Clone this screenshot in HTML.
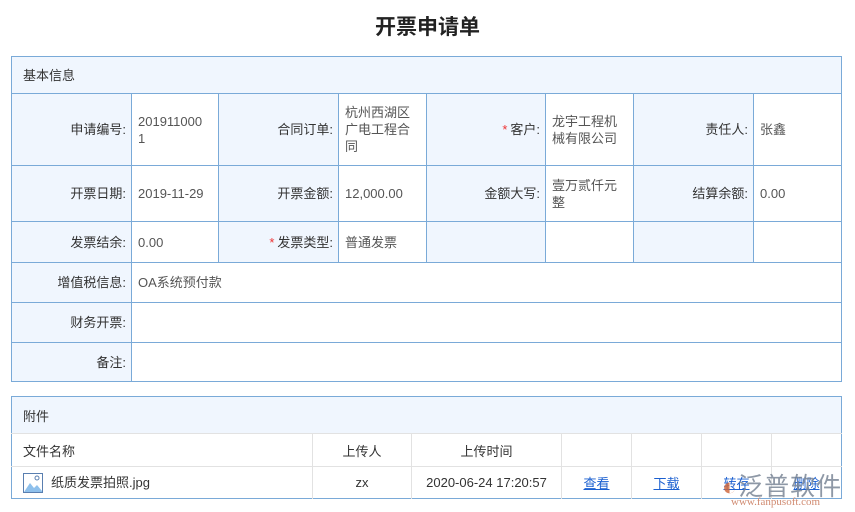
<!DOCTYPE html>
<html><head><meta charset="utf-8"><style>
*{margin:0;padding:0;box-sizing:border-box}
body{width:855px;height:512px;background:#fff;font-family:"Liberation Sans","Noto Sans CJK SC",sans-serif;font-size:13px;color:#333;position:relative;overflow:hidden}
h1{position:absolute;top:11px;left:0;width:855px;text-align:center;font-size:21px;font-weight:bold;color:#222}
table{border-collapse:collapse;position:absolute;left:11px;table-layout:fixed}
.t1{top:56px;width:830px}
.t1 td{border:1px solid #7aaad8;line-height:17px;vertical-align:middle;word-break:break-all}
.t1 .h{background:#f0f6fe;height:37px;padding-left:11px}
.l{background:#f0f6fe;text-align:right;padding-right:5px}
.v{color:#555;padding-left:6px;padding-right:4px}
.s{color:#e33;margin-right:3px}
.t2{top:396px;width:830px;border:1px solid #7aaad8}
.t2 td{border:1px solid #e2e2e2;vertical-align:middle}
.t2 .h{background:#f0f6fe;height:37px;padding-left:11px;border:none;border-bottom:1px solid #e2e2e2}
.c{text-align:center}
a{color:#1a5fd0;text-decoration:underline}
.wm{position:absolute;left:722px;top:467px;color:#7b8797;font-size:25px;letter-spacing:1px;opacity:.85}
.wm2{position:absolute;left:731px;top:496px;color:#d08a70;font-size:11px;font-family:"Liberation Serif",serif}
</style></head><body>
<h1>开票申请单</h1>
<table class="t1">
<colgroup><col style="width:120px"><col style="width:87px"><col style="width:120px"><col style="width:88px"><col style="width:119px"><col style="width:88px"><col style="width:120px"><col style="width:88px"></colgroup>
<tr><td class="h" colspan="8">基本信息</td></tr>
<tr style="height:72px"><td class="l">申请编号:</td><td class="v" style="padding-right:10px">2019110001</td><td class="l">合同订单:</td><td class="v">杭州西湖区广电工程合同</td><td class="l"><span class="s">*</span>客户:</td><td class="v">龙宇工程机械有限公司</td><td class="l">责任人:</td><td class="v">张鑫</td></tr>
<tr style="height:56px"><td class="l">开票日期:</td><td class="v">2019-11-29</td><td class="l">开票金额:</td><td class="v">12,000.00</td><td class="l">金额大写:</td><td class="v">壹万贰仟元整</td><td class="l">结算余额:</td><td class="v">0.00</td></tr>
<tr style="height:41px"><td class="l">发票结余:</td><td class="v">0.00</td><td class="l"><span class="s">*</span>发票类型:</td><td class="v">普通发票</td><td class="l"></td><td class="v"></td><td class="l"></td><td class="v"></td></tr>
<tr style="height:40px"><td class="l">增值税信息:</td><td class="v" colspan="7">OA系统预付款</td></tr>
<tr style="height:40px"><td class="l">财务开票:</td><td class="v" colspan="7"></td></tr>
<tr style="height:39px"><td class="l">备注:</td><td class="v" colspan="7"></td></tr>
</table>
<table class="t2">
<colgroup><col style="width:301px"><col style="width:99px"><col style="width:150px"><col style="width:70px"><col style="width:70px"><col style="width:70px"><col style="width:70px"></colgroup>
<tr><td class="h" colspan="7">附件</td></tr>
<tr style="height:33px"><td style="padding-left:11px;border-left:none">文件名称</td><td class="c">上传人</td><td class="c">上传时间</td><td></td><td></td><td></td><td style="border-right:none"></td></tr>
<tr style="height:32px"><td style="padding-left:11px;border-left:none;border-bottom:none"><svg width="20" height="20" viewBox="0 0 20 20" style="vertical-align:middle;margin-right:8px"><rect x="0.5" y="0.5" width="19" height="19" fill="#fff" stroke="#5a7fb0"/><path d="M1 19 L7 10 L11 15 L14 12 L19 18 V19 Z" fill="#8ec0ec"/><circle cx="14" cy="5" r="2" fill="none" stroke="#5a7fb0"/></svg>纸质发票拍照.jpg</td><td class="c" style="border-bottom:none">zx</td><td class="c" style="border-bottom:none">2020-06-24 17:20:57</td><td class="c" style="border-bottom:none"><a>查看</a></td><td class="c" style="border-bottom:none"><a>下载</a></td><td class="c" style="border-bottom:none"><a>转存</a></td><td class="c" style="border-bottom:none;border-right:none"><a>删除</a></td></tr>
</table>
<div class="wm"><span style="color:#d06a40">◐</span>泛普软件</div>
<div class="wm2">www.fanpusoft.com</div>
</body></html>
